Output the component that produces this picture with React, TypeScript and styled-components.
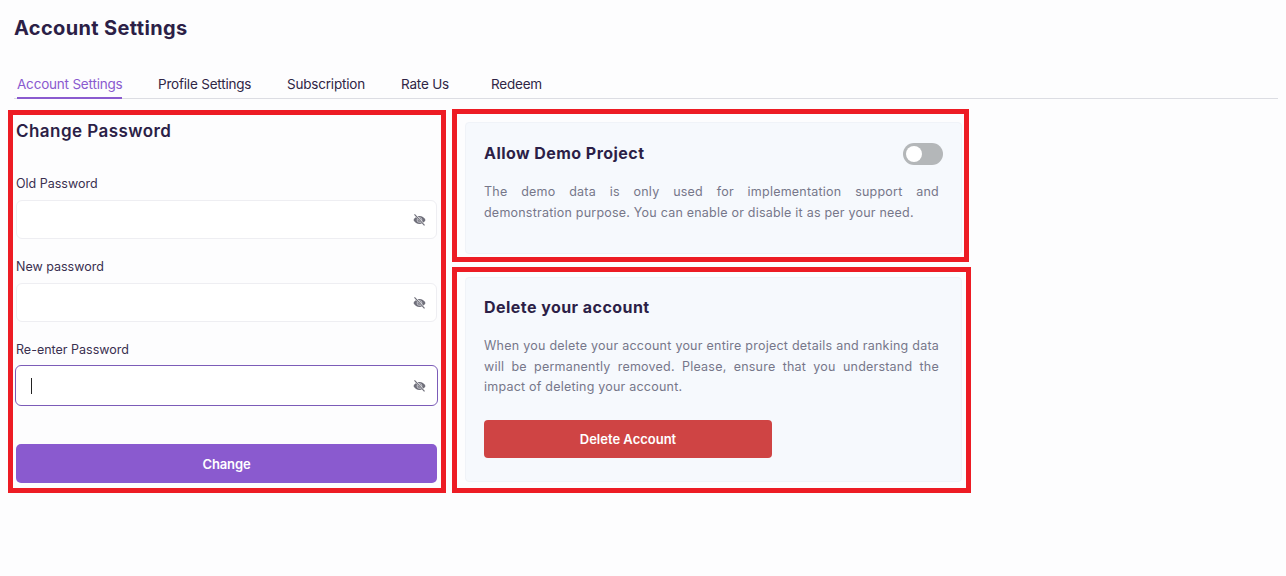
import React from "react";
import styled, { createGlobalStyle } from "styled-components";

const Global = createGlobalStyle`
  html, body { margin: 0; padding: 0; background: #fdfdfe; }
  body { font-family: "Inter", "Noto Sans", sans-serif; color: #2c1f47; }
  * { box-sizing: border-box; }
`;

const Page = styled.div`
  width: 1286px;
  height: 576px;
  overflow: hidden;
  padding: 16px 8px 0 8px;
`;

const Title = styled.h1`
  margin: 0 0 0 6px;
  font-size: 20px;
  line-height: 24px;
  font-weight: 700;
  color: #2c1f47;
  letter-spacing: 0.35px;
`;

const TabBar = styled.nav`
  display: flex;
  margin: 32px 0 0 6px;
  width: 1264px;
  height: 27px;
  padding-left: 3px;
  border-bottom: 1px solid #dcdde3;
`;

const Tab = styled.div<{ $active?: boolean; $width: number }>`
  width: ${(p) => p.$width}px;
  height: 27px;
  padding-top: 3px;
  font-size: 13.5px;
  line-height: 18px;
  white-space: nowrap;
  color: ${(p) => (p.$active ? "#8a5acf" : "#2f2545")};
  letter-spacing: -0.2px;
  border-bottom: 2px solid ${(p) => (p.$active ? "#8a5acf" : "transparent")};
`;

const TabSlot = styled.div<{ $gap: number }>`
  margin-right: ${(p) => p.$gap}px;
`;

const Columns = styled.div`
  display: flex;
  gap: 6px;
  margin-top: 11px;
  align-items: flex-start;
`;

const Marked = styled.section`
  border: 5px solid #ed1c24;
  background: #fdfdfe;
`;

const PasswordPanel = styled(Marked)`
  width: 438px;
  height: 383px;
  padding: 2px 4px 0 3px;
`;

const SideColumn = styled.div`
  display: flex;
  flex-direction: column;
  gap: 5px;
  margin-top: -1px;
`;

const PanelHeading = styled.h2`
  margin: 0 0 30px;
  font-size: 17px;
  line-height: 28px;
  font-weight: 600;
  color: #2c1f47;
  letter-spacing: 0.45px;
`;

const Field = styled.div`
  margin-bottom: 19px;
`;

const FieldLabel = styled.div`
  font-size: 12.5px;
  line-height: 16px;
  padding-top: 1px;
  margin-bottom: 8px;
  height: 17px;
  color: #3a3050;
`;

const InputBox = styled.div<{ $focused?: boolean }>`
  display: flex;
  align-items: center;
  justify-content: space-between;
  height: ${(p) => (p.$focused ? 41 : 39)}px;
  margin: ${(p) => (p.$focused ? "-1px -1px 0" : "0")};
  padding: 0 ${(p) => (p.$focused ? 11 : 10)}px 0 15px;
  background: #fff;
  border-radius: 6px;
  border: 1px solid ${(p) => (p.$focused ? "#7c5cb8" : "#eeeef2")};
`;

const Caret = styled.span`
  width: 1px;
  height: 16px;
  background: #222;
`;

const ChangeButton = styled.button`
  display: block;
  width: 421px;
  height: 39px;
  margin-top: 38px;
  border: 0;
  border-radius: 5px;
  background: #8a5acf;
  color: #fff;
  font: 600 13px "Inter", sans-serif;
  letter-spacing: -0.1px;
`;

const TopPanel = styled(Marked)`
  width: 517px;
  height: 153px;
  padding: 8px 2px 3px 8px;
`;

const BottomPanel = styled(Marked)`
  width: 519px;
  height: 226px;
  padding: 5px 4px 6px 8px;
`;

const Card = styled.div`
  height: 100%;
  width: 497px;
  padding: 0 22px 0 18px;
  background: #f6f9fd;
  border: 1px solid #f0f3f8;
  border-radius: 4px;
`;

const CardHead = styled.div<{ $top: number }>`
  display: flex;
  align-items: center;
  justify-content: space-between;
  height: 22px;
  margin-top: ${(p) => p.$top}px;
  margin-bottom: 18px;
`;

const CardSpacer = styled.div`
  height: 1px;
`;

const CardTitle = styled.h3`
  margin: 0;
  font-size: 16px;
  line-height: 22px;
  font-weight: 700;
  color: #2c1f47;
  letter-spacing: 0.45px;
`;

const Toggle = styled.span`
  display: flex;
  align-items: center;
  width: 40px;
  height: 22px;
  margin: 1px -4px 0 0;
  padding-left: 3px;
  border-radius: 11px;
  background: #b4b7b9;
`;

const Knob = styled.span`
  width: 16px;
  height: 16px;
  border-radius: 50%;
  background: #fff;
`;

const CardText = styled.p`
  margin: 0;
  font-size: 12.5px;
  line-height: 20.7px;
  letter-spacing: 0.22px;
  text-align: justify;
  color: #76778a;
`;

const DeleteButton = styled.button`
  display: block;
  width: 288px;
  height: 38px;
  margin-top: 22px;
  border: 0;
  border-radius: 4px;
  background: #cf4444;
  color: #fff;
  font: 600 13px "Inter", sans-serif;
  letter-spacing: 0;
`;

const EyeOff = () => (
  <svg width="13" height="14" viewBox="0 0 14 14" aria-hidden="true">
    <path d="M0.5 7C2 4.2 4.3 2.8 7 2.8S12 4.2 13.5 7C12 9.8 9.7 11.2 7 11.2S2 9.8 0.5 7Z" fill="#6f6f7a" />
    <circle cx="7" cy="7" r="2.6" fill="none" stroke="#c9c9d0" strokeWidth="1" />
    <path d="M2 1.2L12.6 12.8" stroke="#fff" strokeWidth="2.2" />
    <path d="M1.6 0.9L12.4 12.9" stroke="#6f6f7a" strokeWidth="1.2" />
  </svg>
);

const tabs = [
  { label: "Account Settings", width: 105, gap: 36, active: true },
  { label: "Profile Settings", width: 93, gap: 36 },
  { label: "Subscription", width: 78, gap: 36 },
  { label: "Rate Us", width: 47, gap: 43 },
  { label: "Redeem", width: 50, gap: 0 },
];

const fields = [
  { label: "Old Password" },
  { label: "New password" },
  { label: "Re-enter Password", focused: true },
];

export default function App() {
  return (
    <Page>
      <Global />
      <Title>Account Settings</Title>
      <TabBar>
        {tabs.map((t) => (
          <TabSlot key={t.label} $gap={t.gap}>
            <Tab $active={t.active} $width={t.width}>{t.label}</Tab>
          </TabSlot>
        ))}
      </TabBar>
      <Columns>
        <PasswordPanel>
          <PanelHeading>Change Password</PanelHeading>
          {fields.map((f) => (
            <Field key={f.label}>
              <FieldLabel>{f.label}</FieldLabel>
              <InputBox $focused={f.focused}>
                {f.focused ? <Caret /> : <span />}
                <EyeOff />
              </InputBox>
            </Field>
          ))}
          <ChangeButton>Change</ChangeButton>
        </PasswordPanel>
        <SideColumn>
          <TopPanel>
            <Card>
              <CardSpacer />
              <CardHead $top={18}>
                <CardTitle>Allow Demo Project</CardTitle>
                <Toggle><Knob /></Toggle>
              </CardHead>
              <CardText>
                The demo data is only used for implementation support and demonstration purpose. You can enable or disable it as per your need.
              </CardText>
            </Card>
          </TopPanel>
          <BottomPanel>
            <Card>
              <CardSpacer />
              <CardHead $top={17}>
                <CardTitle>Delete your account</CardTitle>
              </CardHead>
              <CardText>
                When you delete your account your entire project details and ranking data will be permanently removed. Please, ensure that you understand the impact of deleting your account.
              </CardText>
              <DeleteButton>Delete Account</DeleteButton>
            </Card>
          </BottomPanel>
        </SideColumn>
      </Columns>
    </Page>
  );
}
